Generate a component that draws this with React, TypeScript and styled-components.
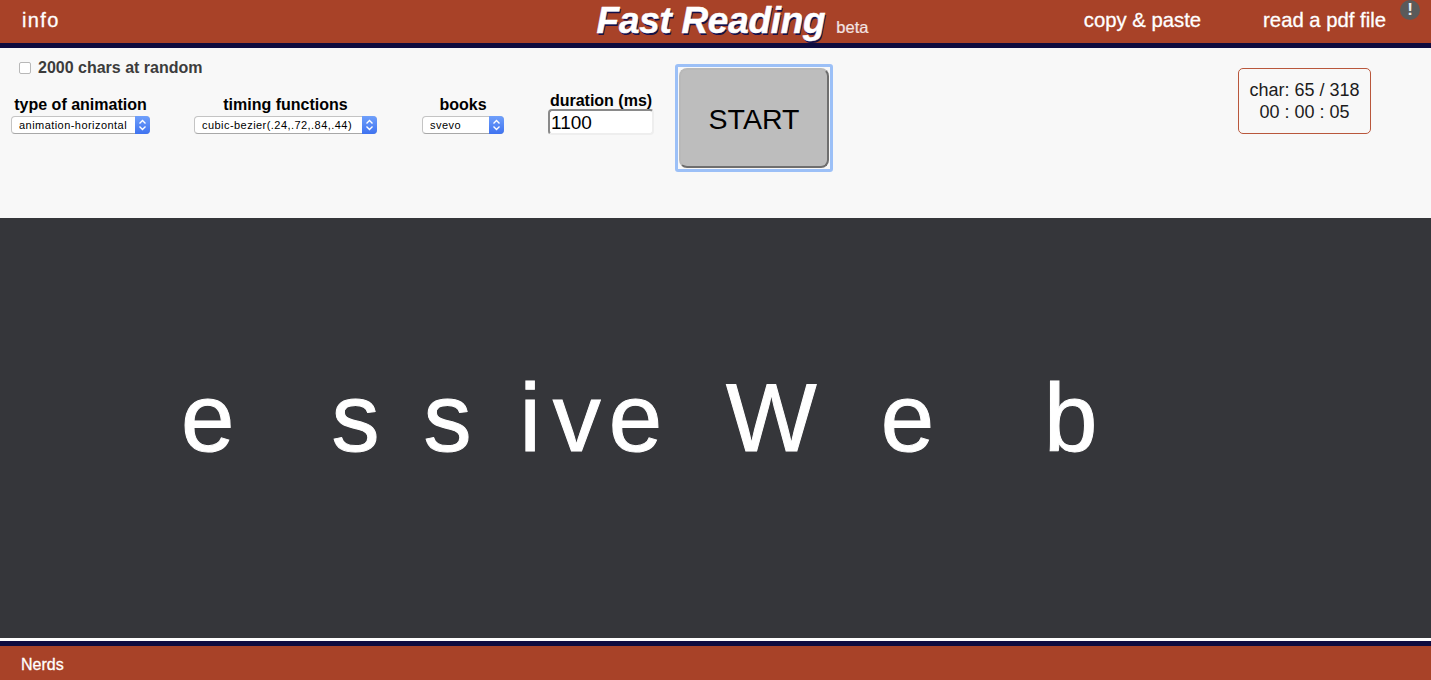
import { createGlobalStyle, styled } from "styled-components"

const GlobalStyle = createGlobalStyle`
  html, body {
    margin: 0;
    padding: 0;
    background: #35363a;
    font-family: "Liberation Sans", Arial, sans-serif;
  }
`

const Page = styled.div`
  width: 1431px;
  height: 680px;
  overflow: hidden;
  display: flex;
  flex-direction: column;
`

const Header = styled.header`
  position: relative;
  height: 43px;
  flex: none;
  background: #a84228;
  border-bottom: 5px solid #0e0b3f;
  display: grid;
  grid-template-columns: 1fr auto 1fr;
  align-items: center;
`

const NavLeft = styled.a`
  padding-left: 22px;
  margin-bottom: 3px;
  color: #fff;
  font-size: 20px;
  letter-spacing: 1.4px;
  -webkit-text-stroke: 0.3px #fff;
`

const Brand = styled.div`
  display: flex;
  align-items: baseline;
  gap: 11px;
  margin: 0 0 2px 34px;
`

const Title = styled.h1`
  margin: 0;
  color: #fff;
  font-size: 37px;
  font-weight: 700;
  font-style: italic;
  letter-spacing: -0.3px;
  -webkit-text-stroke: 0.5px #fff;
  text-shadow: 1px 2px 0 #14104a;
`

const Beta = styled.span`
  color: #f3e4e4;
  font-size: 16.5px;
  -webkit-text-stroke: 0.2px #f3e4e4;
`

const NavRight = styled.nav`
  display: flex;
  justify-content: flex-end;
  gap: 62px;
  padding-right: 45px;
  margin-bottom: 3px;
  color: #fff;
  font-size: 20.3px;
  -webkit-text-stroke: 0.3px #fff;
`

const Alert = styled.span`
  position: absolute;
  top: 0;
  right: 11px;
  width: 20px;
  height: 20px;
  border-radius: 50%;
  background: #5a5a5a;
  color: #eee;
  font-size: 17px;
  font-weight: 700;
  line-height: 20px;
  text-align: center;
`

const Controls = styled.section`
  position: relative;
  height: 170px;
  flex: none;
  background: #f8f8f8;
  display: flex;
  flex-direction: column;
`

const RandomRow = styled.label`
  display: flex;
  align-items: center;
  gap: 7px;
  padding: 10px 0 0 19px;
  height: 19px;
  color: #3c3c3c;
  font-size: 16px;
  font-weight: 700;
`

const Box = styled.span`
  width: 10px;
  height: 10px;
  border: 1px solid #b8b8b8;
  border-radius: 2px;
  background: #fff;
`

const Fields = styled.div`
  display: flex;
  align-items: flex-start;
`

const Field = styled.div<{ $w: number; $ml: number }>`
  width: ${(p) => p.$w}px;
  margin-left: ${(p) => p.$ml}px;
  margin-top: 19px;
  display: flex;
  flex-direction: column;
  align-items: center;
`

const FieldLabel = styled.span`
  color: #000;
  font-size: 16px;
  font-weight: 700;
  line-height: 18px;
  white-space: nowrap;
`

const SelectWrap = styled.div`
  position: relative;
  width: 100%;
  height: 18px;
  margin-top: 2px;
`

const Select = styled.select`
  appearance: none;
  width: 100%;
  height: 18px;
  padding: 0 0 0 7px;
  margin: 0;
  display: block;
  border: 1px solid #c4c4c4;
  border-bottom-color: #a8a8a8;
  border-radius: 4px;
  background: #fff;
  color: #000;
  font-family: "Liberation Sans", Arial, sans-serif;
  font-size: 11px;
  letter-spacing: 0.45px;
`

const Stepper = styled.span`
  position: absolute;
  top: 0;
  right: 0;
  width: 15px;
  height: 18px;
  border-radius: 0 4px 4px 0;
  background: linear-gradient(#6fa0fb, #3f73f0);
  display: flex;
  align-items: center;
  justify-content: center;
  pointer-events: none;
`

const DurationField = styled.div`
  width: 106px;
  margin-left: 44px;
  margin-top: 15px;
  display: flex;
  flex-direction: column;
  align-items: center;
`

const DurationInput = styled.input`
  box-sizing: border-box;
  width: 106px;
  height: 26px;
  margin-top: -1px;
  padding: 2px 1px 0;
  border: 2px solid #eeeeee;
  border-top-color: #8a8a8a;
  border-left-color: #8a8a8a;
  border-radius: 4px;
  background: #fff;
  color: #000;
  font-family: "Liberation Sans", Arial, sans-serif;
  font-size: 19px;
  outline: none;
`

const StartFrame = styled.div`
  box-sizing: border-box;
  width: 158px;
  height: 108px;
  margin: -13px 0 0 21px;
  padding: 1px;
  border: 3px solid #9cc0f7;
  border-radius: 3px;
`

const StartButton = styled.button`
  box-sizing: border-box;
  display: block;
  width: 150px;
  height: 100px;
  padding: 2px 0 0;
  border: 2px solid #b9b9b9;
  border-right-color: #6e6e6e;
  border-bottom-color: #6e6e6e;
  border-radius: 8px;
  background: #bdbdbd;
  color: #000;
  font-family: "Liberation Sans", Arial, sans-serif;
  font-size: 28.5px;
`

const Counter = styled.div`
  position: absolute;
  top: 20px;
  left: 1238px;
  box-sizing: border-box;
  width: 133px;
  height: 66px;
  padding-top: 10px;
  border: 1px solid #b9573c;
  border-radius: 5px;
  color: #1c1c1c;
  font-size: 18px;
  line-height: 22px;
  text-align: center;
`

const Stage = styled.main`
  flex: 1;
  background: #35363a;
  display: flex;
  align-items: center;
  overflow: hidden;
`

const Letters = styled.div`
  display: flex;
  align-items: baseline;
  margin-top: -23px;
  padding-left: 181px;
  color: #fff;
  font-size: 96px;
  line-height: 110px;
  -webkit-text-stroke: 1px #fff;
`

const Letter = styled.span<{ $gap: number }>`
  margin-right: ${(p) => p.$gap}px;
`

const Footer = styled.footer`
  flex: none;
  box-sizing: border-box;
  height: 39px;
  padding: 4px 0 0 21px;
  background: #a84228;
  border-top: 5px solid #0e0b3f;
  box-shadow: 0 -3px 0 #fff;
  display: flex;
  align-items: center;
  color: #fff;
  font-size: 16px;
  -webkit-text-stroke: 0.3px #fff;
`

const letters: [string, number][] = [
  ["e", 97],
  ["s", 44],
  ["s", 48],
  ["i", 12],
  ["v", 8],
  ["e", 64],
  ["W", 64],
  ["e", 110],
  ["b", 0],
]

function Chevrons() {
  return (
    <svg width="9" height="12" viewBox="0 0 9 12" fill="none" stroke="#fff" strokeWidth="1.4">
      <path d="M1.5 4.5 4.5 1.5l3 3" />
      <path d="M1.5 7.5l3 3 3-3" />
    </svg>
  )
}

function Dropdown({ value }: { value: string }) {
  return (
    <SelectWrap>
      <Select defaultValue={value}>
        <option>{value}</option>
      </Select>
      <Stepper>
        <Chevrons />
      </Stepper>
    </SelectWrap>
  )
}

export default function App() {
  return (
    <Page>
      <GlobalStyle />
      <Header>
        <NavLeft>info</NavLeft>
        <Brand>
          <Title>Fast Reading</Title>
          <Beta>beta</Beta>
        </Brand>
        <NavRight>
          <span>copy &amp; paste</span>
          <span>read a pdf file</span>
        </NavRight>
        <Alert>!</Alert>
      </Header>
      <Controls>
        <RandomRow>
          <Box />
          2000 chars at random
        </RandomRow>
        <Fields>
          <Field $w={139} $ml={11}>
            <FieldLabel>type of animation</FieldLabel>
            <Dropdown value="animation-horizontal" />
          </Field>
          <Field $w={183} $ml={44}>
            <FieldLabel>timing functions</FieldLabel>
            <Dropdown value="cubic-bezier(.24,.72,.84,.44)" />
          </Field>
          <Field $w={82} $ml={45}>
            <FieldLabel>books</FieldLabel>
            <Dropdown value="svevo" />
          </Field>
          <DurationField>
            <FieldLabel>duration (ms)</FieldLabel>
            <DurationInput defaultValue="1100" />
          </DurationField>
          <StartFrame>
            <StartButton>START</StartButton>
          </StartFrame>
        </Fields>
        <Counter>
          char: 65 / 318
          <br />
          00 : 00 : 05
        </Counter>
      </Controls>
      <Stage>
        <Letters>
          {letters.map(([c, gap], i) => (
            <Letter key={i} $gap={gap}>
              {c}
            </Letter>
          ))}
        </Letters>
      </Stage>
      <Footer>Nerds</Footer>
    </Page>
  )
}
